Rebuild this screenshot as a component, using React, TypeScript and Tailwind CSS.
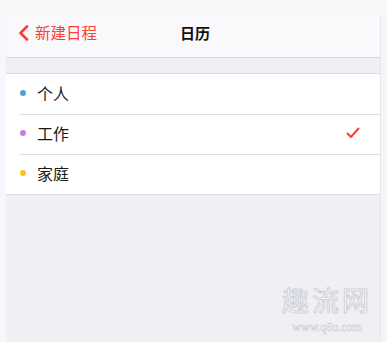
import React from "react";

const rows = [
  { label: "个人", color: "#4ea3cf", checked: false },
  { label: "工作", color: "#c77ee0", checked: true },
  { label: "家庭", color: "#fcc21b", checked: false },
];

export default function App() {
  return (
    <div
      className="w-[387px] h-[342px] flex flex-col bg-[#f8f8fa] overflow-hidden relative"
      style={{ fontFamily: '"Noto Sans CJK SC", "Noto Sans", sans-serif' }}
    >
      <div className="h-[16px] shrink-0 bg-[#f8f8fa]" />
      <div className="flex flex-1 min-h-0">
        <div className="w-[6px] shrink-0 bg-[#f4f7fb]" />
        <div className="flex-1 flex flex-col bg-[#efeff4]">
          <div className="h-[42px] shrink-0 bg-[#f9f9fb] border-b border-[#d9d9de] relative flex items-center pb-[8px]">
            <div className="flex items-center pl-[12px] text-[#fb3f3a]">
              <svg width="11" height="16" viewBox="0 0 11 16" className="mr-[6px]">
                <path d="M9 1.5 L2.5 8 L9 14.5" fill="none" stroke="#fb3f3a" strokeWidth="2.6" strokeLinecap="round" strokeLinejoin="round" />
              </svg>
              <span className="text-[15.5px] leading-none">新建日程</span>
            </div>
            <div className="absolute inset-0 flex items-center justify-center pointer-events-none pb-[8px]">
              <span className="text-[15px] font-bold text-[#111] leading-none ml-[4px]">日历</span>
            </div>
          </div>
          <div className="h-[15px] shrink-0" />
          <div className="bg-white border-t border-b border-[#dcdce0]">
            {rows.map((r, i) => (
              <div key={r.label} className="flex h-[40px]">
                <div className="w-[14px] shrink-0" />
                <div className={`flex-1 flex items-center pb-[3px] ${i > 0 ? "border-t border-[#dcdce0]" : ""}`}>
                  <span className="w-[6px] h-[6px] rounded-full" style={{ backgroundColor: r.color }} />
                  <span className="ml-[11px] text-[16px] text-[#1a1a1a] leading-none">{r.label}</span>
                  <div className="flex-1" />
                  {r.checked && (
                    <svg width="14" height="12" viewBox="0 0 14 12" className="mr-[20px]">
                      <path d="M1.5 6.5 L5 10 L12.5 1.5" fill="none" stroke="#fb3f3a" strokeWidth="2" strokeLinecap="round" strokeLinejoin="round" />
                    </svg>
                  )}
                </div>
              </div>
            ))}
          </div>
          <div className="flex-1" />
        </div>
        <div className="w-[7px] shrink-0 bg-[#f2f6fb] border-l border-[#e4e7ec]" />
      </div>
      <div className="absolute left-[282px] top-[284px] flex flex-col items-center pointer-events-none">
        <span
          className="text-[27px] leading-[32px] tracking-[3px] text-white"
          style={{ WebkitTextStroke: "1px #cfcfd5", fontFamily: '"Noto Sans CJK SC", sans-serif' }}
        >
          趣流网
        </span>
        <span
          className="text-[12px] leading-[13px] mt-[5px] text-white"
          style={{ WebkitTextStroke: "0.6px #cfcfd5", fontFamily: '"Liberation Serif", serif' }}
        >
          www.q6u.com
        </span>
      </div>
    </div>
  );
}
